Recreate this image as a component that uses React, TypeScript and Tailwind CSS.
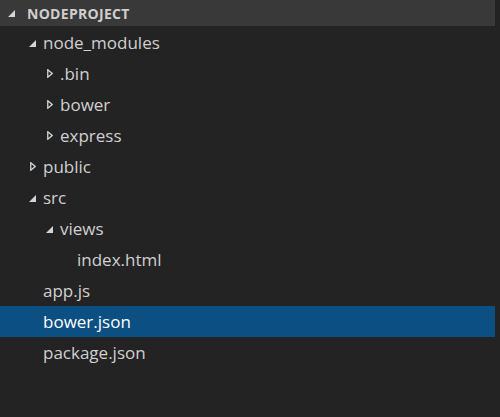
import type { ReactNode } from 'react'

type Node = {
  name: string
  depth: number
  kind: 'open' | 'closed' | 'file'
  selected?: boolean
}

const TREE: Node[] = [
  { name: 'node_modules', depth: 0, kind: 'open' },
  { name: '.bin', depth: 1, kind: 'closed' },
  { name: 'bower', depth: 1, kind: 'closed' },
  { name: 'express', depth: 1, kind: 'closed' },
  { name: 'public', depth: 0, kind: 'closed' },
  { name: 'src', depth: 0, kind: 'open' },
  { name: 'views', depth: 1, kind: 'open' },
  { name: 'index.html', depth: 2, kind: 'file' },
  { name: 'app.js', depth: 0, kind: 'file' },
  { name: 'bower.json', depth: 0, kind: 'file', selected: true },
  { name: 'package.json', depth: 0, kind: 'file' },
]

const PAD = ['pl-[43px]', 'pl-[60px]', 'pl-[77px]']

function Twisty({ kind }: { kind: Node['kind'] }) {
  if (kind === 'open') {
    return (
      <svg width="7" height="7" viewBox="0 0 7 7" className="absolute -left-[14px] top-[13px]">
        <polygon points="7,0 7,7 0,7" fill="#d4d4d4" />
      </svg>
    )
  }
  if (kind === 'closed') {
    return (
      <svg width="6" height="9" viewBox="0 0 6 9" className="absolute -left-[13px] top-[11px]">
        <polygon points="0.75,0.75 5.2,4.5 0.75,8.25" fill="none" stroke="#d4d4d4" strokeWidth="1.3" />
      </svg>
    )
  }
  return null
}

function Row({ node }: { node: Node }): ReactNode {
  return (
    <div
      className={`h-[31px] w-[495px] ${PAD[node.depth]} ${node.selected ? 'bg-[#0c4f82] text-white' : 'text-[#d0d0d0]'}`}
    >
      <div className="relative inline-block h-full leading-[31px]">
        <Twisty kind={node.kind} />
        {node.name}
      </div>
    </div>
  )
}

export default function App() {
  return (
    <div
      className="w-[500px] h-[417px] bg-[#232323] overflow-hidden"
      style={{ fontFamily: '"Open Sans", "Noto Sans", sans-serif' }}
    >
      <div className="h-[26px] w-[495px] bg-[#393939] flex items-center pl-[8px] gap-[12px]">
        <svg width="7" height="7" viewBox="0 0 7 7">
          <polygon points="7,0 7,7 0,7" fill="#d4d4d4" />
        </svg>
        <span className="text-[14px] font-bold text-[#cfcfcf] tracking-[0.3px]">NODEPROJECT</span>
      </div>
      <div className="pt-px text-[17px]">
        {TREE.map(n => (
          <Row key={n.name} node={n} />
        ))}
      </div>
    </div>
  )
}
